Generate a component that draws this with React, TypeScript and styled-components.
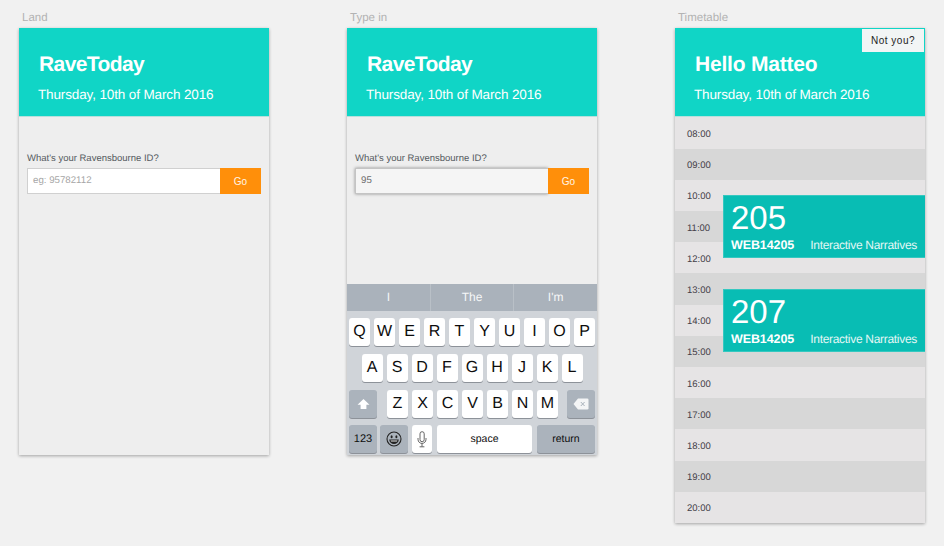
import React from 'react'
import styled, { createGlobalStyle } from 'styled-components'

const GlobalStyle = createGlobalStyle`
  html, body {
    margin: 0;
    padding: 0;
    background: #f1f1f1;
    font-family: "Liberation Sans", Arial, sans-serif;
    text-rendering: geometricPrecision;
  }
`

const Page = styled.div`
  display: flex;
  gap: 78px;
  width: 944px;
  height: 546px;
  padding: 11px 0 0 19px;
  box-sizing: border-box;
  overflow: hidden;
`

const Board = styled.section`
  width: 250px;
  display: flex;
  flex-direction: column;
`

const BoardLabel = styled.div`
  height: 16px;
  padding: 1px 0 0 3px;
  font-size: 11.5px;
  line-height: 12px;
  color: #b3b3b3;
`

const Screen = styled.div<{ $height: number }>`
  position: relative;
  height: ${(p) => p.$height}px;
  background: #eeeeee;
  box-shadow: 0 1px 3px rgba(0, 0, 0, 0.32);
  display: flex;
  flex-direction: column;
`

const Header = styled.header`
  position: relative;
  height: 89px;
  flex: none;
  box-sizing: border-box;
  padding: 24px 0 0 20px;
  background: #10d5c6;
  border-bottom: 1px solid #b8e0dc;
  color: #fff;
`

const Title = styled.h1<{ $tight?: boolean }>`
  margin: 0;
  font-size: 21px;
  line-height: 25px;
  font-weight: 700;
  letter-spacing: ${(p) => (p.$tight ? -0.6 : -0.2)}px;
`

const DateLine = styled.div`
  margin: 9px 0 0 -1px;
  font-size: 13.5px;
  line-height: 18px;
  letter-spacing: -0.13px;
`

const NotYou = styled.button`
  position: absolute;
  top: 1px;
  right: 1px;
  width: 62px;
  height: 23px;
  padding: 0;
  border: 0;
  background: #f2f5f5;
  font-family: inherit;
  font-size: 10px;
  letter-spacing: 0.5px;
  color: #222;
`

const Form = styled.div`
  padding: 35px 8px 0;
`

const FieldLabel = styled.div`
  font-size: 9.5px;
  line-height: 14px;
  margin-bottom: 2px;
  color: #555a60;
`

const FieldRow = styled.div`
  display: flex;
  height: 26px;
`

const Field = styled.div<{ $active?: boolean }>`
  flex: 1;
  box-sizing: border-box;
  padding-left: 5px;
  font-size: 9.7px;
  line-height: 24px;
  background: ${(p) => (p.$active ? '#f5f5f5' : '#fff')};
  border: 1px solid ${(p) => (p.$active ? '#c4c4c4' : '#d0d0d0')};
  border-right: 0;
  color: ${(p) => (p.$active ? '#6b6b6b' : '#a6a6a6')};
  box-shadow: ${(p) => (p.$active ? '0 0 3px rgba(0, 0, 0, 0.4)' : 'none')};
`

const GoButton = styled.button`
  width: 41px;
  padding: 0;
  border: 0;
  background: #ff8f0a;
  color: #fff5e6;
  font-family: inherit;
  font-size: 10px;
`

const Keyboard = styled.div`
  margin-top: auto;
  height: 171px;
  background: #d0d4d9;
  display: flex;
  flex-direction: column;
`

const Suggestions = styled.div`
  display: grid;
  grid-template-columns: repeat(3, 1fr);
  gap: 1px;
  height: 27px;
  background: #b9c0c7;
  flex: none;
`

const Suggestion = styled.div`
  background: #aab2bb;
  color: #f6f7f8;
  font-size: 12px;
  line-height: 27px;
  text-align: center;
`

const KeyRows = styled.div`
  padding: 7px 2px 0;
  display: flex;
  flex-direction: column;
  gap: 8px;
`

const KeyRow = styled.div`
  display: flex;
  gap: 4px;
  height: 28px;
`

const LetterRow = styled(KeyRow)`
  justify-content: center;
`

const BottomRow = styled(KeyRow)`
  margin-top: -1px;
  gap: 3px;
`

const Key = styled.div<{ $width?: number; $dark?: boolean; $size?: number; $mr?: number }>`
  width: ${(p) => p.$width ?? 21}px;
  margin-right: ${(p) => p.$mr ?? 0}px;
  flex: none;
  display: flex;
  align-items: center;
  justify-content: center;
  border-radius: 3px;
  background: ${(p) => (p.$dark ? '#abb3bc' : '#fff')};
  box-shadow: 0 1px 0 #8d9299;
  font-size: ${(p) => p.$size ?? 16}px;
  color: #0d0d0d;
`

const Spacer = styled.div<{ $width: number }>`
  width: ${(p) => p.$width}px;
  flex: none;
`

const Rows = styled.div`
  display: flex;
  flex-direction: column;
  flex: 1;
  padding-top: 0.4px;
`

const HourRow = styled.div<{ $odd: boolean }>`
  flex: 1;
  padding: 3px 0 0 12px;
  display: flex;
  align-items: center;
  font-size: 9.5px;
  color: #444048;
  background: ${(p) => (p.$odd ? '#d7d7d7' : '#e6e4e5')};
`

const SessionCard = styled.div<{ $top: number }>`
  position: absolute;
  top: ${(p) => p.$top}px;
  left: 48px;
  right: 0;
  height: 63px;
  box-sizing: border-box;
  padding: 3px 8px 0 7px;
  background: #08bdb4;
  border: 1px solid #35c8c0;
  border-right: 0;
  color: #fff;
`

const Room = styled.div`
  font-size: 33px;
  line-height: 38px;
`

const CardFoot = styled.div`
  display: flex;
  justify-content: space-between;
  align-items: baseline;
  margin-top: 1px;
`

const Code = styled.span`
  font-size: 12.5px;
  font-weight: 700;
  letter-spacing: -0.1px;
`

const Course = styled.span`
  font-size: 12px;
  letter-spacing: -0.3px;
  color: #e2f7f5;
`

const ShiftIcon = () => (
  <svg width="13" height="12" viewBox="0 0 13 12">
    <path d="M6.5 1 12.5 6.8H9.4V11H3.6V6.8H.5Z" fill="#fff" />
  </svg>
)

const DeleteIcon = () => (
  <svg width="16" height="12" viewBox="0 0 16 12">
    <path d="M5 .5H14.2A1.3 1.3 0 0 1 15.5 1.8V10.2A1.3 1.3 0 0 1 14.2 11.5H5L.5 6Z" fill="#f4f5f6" />
    <path d="M7.8 4 11.6 8M11.6 4 7.8 8" stroke="#a9b2bb" strokeWidth="1" />
  </svg>
)

const EmojiIcon = () => (
  <svg width="16" height="16" viewBox="0 0 16 16">
    <circle cx="8" cy="8" r="7" fill="none" stroke="#222" strokeWidth="1.1" />
    <ellipse cx="5.6" cy="5.8" rx="1" ry="1.5" fill="#222" />
    <ellipse cx="10.4" cy="5.8" rx="1" ry="1.5" fill="#222" />
    <path d="M3.2 8.6H12.8C12.6 11.6 10.6 13 8 13S3.4 11.6 3.2 8.6Z" fill="#222" />
    <path d="M4.6 9.4H11.4L11 10.6H5Z" fill="#e8e8e8" />
  </svg>
)

const MicIcon = () => (
  <svg width="10" height="17" viewBox="0 0 10 17">
    <rect x="3" y=".7" width="4.2" height="10" rx="2.1" fill="none" stroke="#555" strokeWidth="0.9" />
    <path d="M1 7V8.3C1 10.8 2.8 12.4 5 12.4S9 10.8 9 8.3V7M5 12.4V15.6M2.6 15.8H7.4" fill="none" stroke="#555" strokeWidth="0.9" />
  </svg>
)

const ROW_ONE = ['Q', 'W', 'E', 'R', 'T', 'Y', 'U', 'I', 'O', 'P']
const ROW_TWO = ['A', 'S', 'D', 'F', 'G', 'H', 'J', 'K', 'L']
const ROW_THREE = ['Z', 'X', 'C', 'V', 'B', 'N', 'M']
const HOURS = ['08', '09', '10', '11', '12', '13', '14', '15', '16', '17', '18', '19', '20']
const DATE = 'Thursday, 10th of March 2016'

function IosKeyboard() {
  return (
    <Keyboard>
      <Suggestions>
        <Suggestion>I</Suggestion>
        <Suggestion>The</Suggestion>
        <Suggestion>I'm</Suggestion>
      </Suggestions>
      <KeyRows>
        <KeyRow>
          {ROW_ONE.map((k) => (
            <Key key={k}>{k}</Key>
          ))}
        </KeyRow>
        <LetterRow>
          {ROW_TWO.map((k) => (
            <Key key={k}>{k}</Key>
          ))}
        </LetterRow>
        <KeyRow>
          <Key $width={28} $dark>
            <ShiftIcon />
          </Key>
          <Spacer $width={2} />
          {ROW_THREE.map((k) => (
            <Key key={k}>{k}</Key>
          ))}
          <Spacer $width={1} />
          <Key $width={28} $dark>
            <DeleteIcon />
          </Key>
        </KeyRow>
        <BottomRow>
          <Key $width={28} $dark $size={11}>
            123
          </Key>
          <Key $width={28} $dark $mr={1}>
            <EmojiIcon />
          </Key>
          <Key $width={20} $mr={2}>
            <MicIcon />
          </Key>
          <Key $width={95} $size={10.5} $mr={2}>
            space
          </Key>
          <Key $width={58} $dark $size={10.5}>
            return
          </Key>
        </BottomRow>
      </KeyRows>
    </Keyboard>
  )
}

export default function App() {
  return (
    <>
      <GlobalStyle />
      <Page>
        <Board>
          <BoardLabel>Land</BoardLabel>
          <Screen $height={427}>
            <Header>
              <Title $tight>RaveToday</Title>
              <DateLine>{DATE}</DateLine>
            </Header>
            <Form>
              <FieldLabel>What's your Ravensbourne ID?</FieldLabel>
              <FieldRow>
                <Field>eg: 95782112</Field>
                <GoButton>Go</GoButton>
              </FieldRow>
            </Form>
          </Screen>
        </Board>

        <Board>
          <BoardLabel>Type in</BoardLabel>
          <Screen $height={427}>
            <Header>
              <Title $tight>RaveToday</Title>
              <DateLine>{DATE}</DateLine>
            </Header>
            <Form>
              <FieldLabel>What's your Ravensbourne ID?</FieldLabel>
              <FieldRow>
                <Field $active>95</Field>
                <GoButton>Go</GoButton>
              </FieldRow>
            </Form>
            <IosKeyboard />
          </Screen>
        </Board>

        <Board>
          <BoardLabel>Timetable</BoardLabel>
          <Screen $height={495}>
            <Header>
              <Title>Hello Matteo</Title>
              <DateLine>{DATE}</DateLine>
              <NotYou>Not you?</NotYou>
            </Header>
            <Rows>
              {HOURS.map((h, i) => (
                <HourRow key={h} $odd={i % 2 === 1}>
                  {h}:00
                </HourRow>
              ))}
            </Rows>
            <SessionCard $top={167}>
              <Room>205</Room>
              <CardFoot>
                <Code>WEB14205</Code>
                <Course>Interactive Narratives</Course>
              </CardFoot>
            </SessionCard>
            <SessionCard $top={261}>
              <Room>207</Room>
              <CardFoot>
                <Code>WEB14205</Code>
                <Course>Interactive Narratives</Course>
              </CardFoot>
            </SessionCard>
          </Screen>
        </Board>
      </Page>
    </>
  )
}
